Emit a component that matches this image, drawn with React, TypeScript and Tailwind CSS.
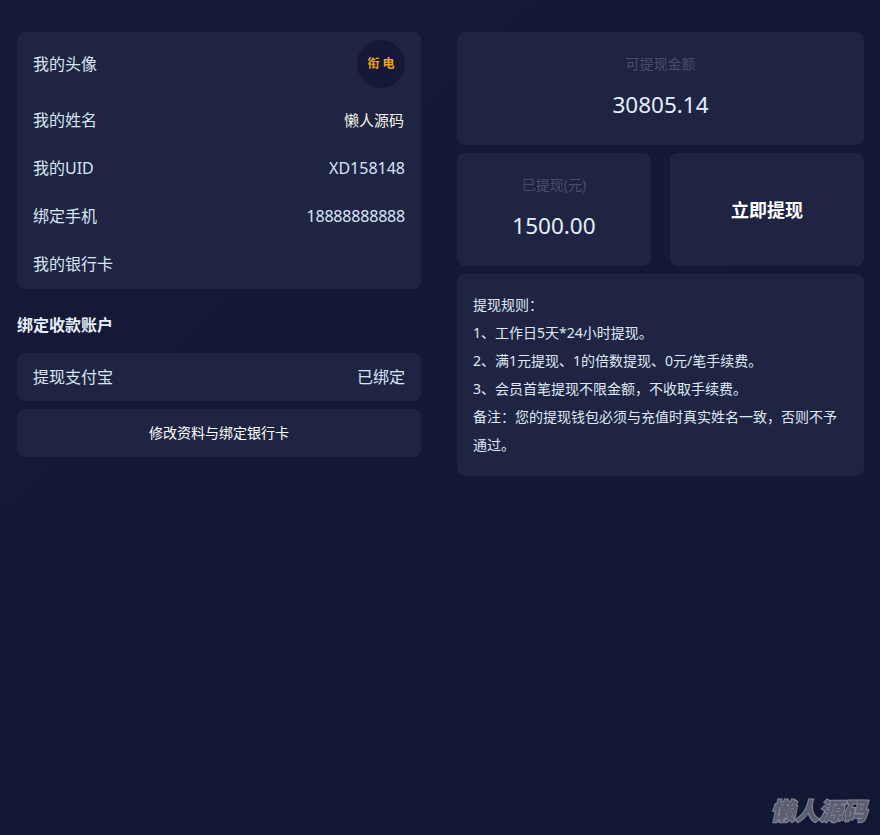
const font = { fontFamily: '"Noto Sans", "Noto Sans CJK SC", sans-serif' };

function Row({ label, children }: { label: string; children?: React.ReactNode }) {
  return (
    <div className="flex h-12 items-center justify-between px-4 text-base text-[#d8e6f5]">
      <span>{label}</span>
      {children}
    </div>
  );
}

function Stat({ label, value }: { label: string; value: string }) {
  return (
    <div className="flex h-[113px] flex-col items-center rounded-lg bg-[#202443] pt-[21px]">
      <div className="text-sm leading-[22px] text-[#474e68]">{label}</div>
      <div className="mt-[14px] text-[22.5px] leading-8 text-[#e2f0fb]">{value}</div>
    </div>
  );
}

const rules = [
  '提现规则：',
  '1、工作日5天*24小时提现。',
  '2、满1元提现、1的倍数提现、0元/笔手续费。',
  '3、会员首笔提现不限金额，不收取手续费。',
  '备注：您的提现钱包必须与充值时真实姓名一致，否则不予通过。',
];

export default function App() {
  return (
    <div
      className="relative h-[835px] w-[880px] overflow-hidden bg-gradient-to-br from-[#161a38] to-[#121733]"
      style={font}
    >
      <div className="flex gap-9 pl-[17px] pr-4 pt-8">
        {/* Left column */}
        <div className="w-[404px] shrink-0">
          <div className="rounded-lg bg-[#202443] pb-px">
            <div className="flex h-16 items-center justify-between px-4 text-base text-[#d8e6f5]">
              <span>我的头像</span>
              <div className="flex h-12 w-12 items-center justify-center rounded-full bg-[#151937] pl-[3px] text-xs font-bold tracking-[3px] text-[#f0a41e]">
                衔电
              </div>
            </div>
            <Row label="我的姓名">
              <span className="mr-px text-[15px] text-[#f2f5e6]">懒人源码</span>
            </Row>
            <Row label="我的UID">
              <span>XD158148</span>
            </Row>
            <Row label="绑定手机">
              <span className="tracking-[-0.2px]">18888888888</span>
            </Row>
            <Row label="我的银行卡" />
          </div>

          <h2 className="flex h-16 items-center pt-2 text-base font-bold text-[#e4f0fa]">绑定收款账户</h2>

          <div className="rounded-lg bg-[#202443]">
            <Row label="提现支付宝">
              <span>已绑定</span>
            </Row>
          </div>
          <div className="mt-2 flex h-12 items-center justify-center rounded-lg bg-[#202443] text-sm text-white">
            修改资料与绑定银行卡
          </div>
        </div>

        {/* Right column */}
        <div className="flex w-[407px] shrink-0 flex-col gap-2">
          <Stat label="可提现金额" value="30805.14" />
          <div className="grid grid-cols-2 gap-[19px]">
            <Stat label="已提现(元)" value="1500.00" />
            <div className="flex h-[113px] items-center justify-center rounded-lg bg-[#202443] text-lg font-bold text-white">
              立即提现
            </div>
          </div>
          <div className="rounded-lg bg-[#202443] px-4 py-[17px] text-sm leading-7 text-[#dfe9f5]">
            {rules.map((line) => (
              <div key={line}>{line}</div>
            ))}
          </div>
        </div>
      </div>

      {/* Watermark */}
      <div className="absolute bottom-[8px] right-[11px] -skew-x-12 text-2xl font-black leading-8 text-[#5a5e70] [-webkit-text-stroke:2px_#85899a] [paint-order:stroke_fill]">
        懒人源码
      </div>
    </div>
  );
}
